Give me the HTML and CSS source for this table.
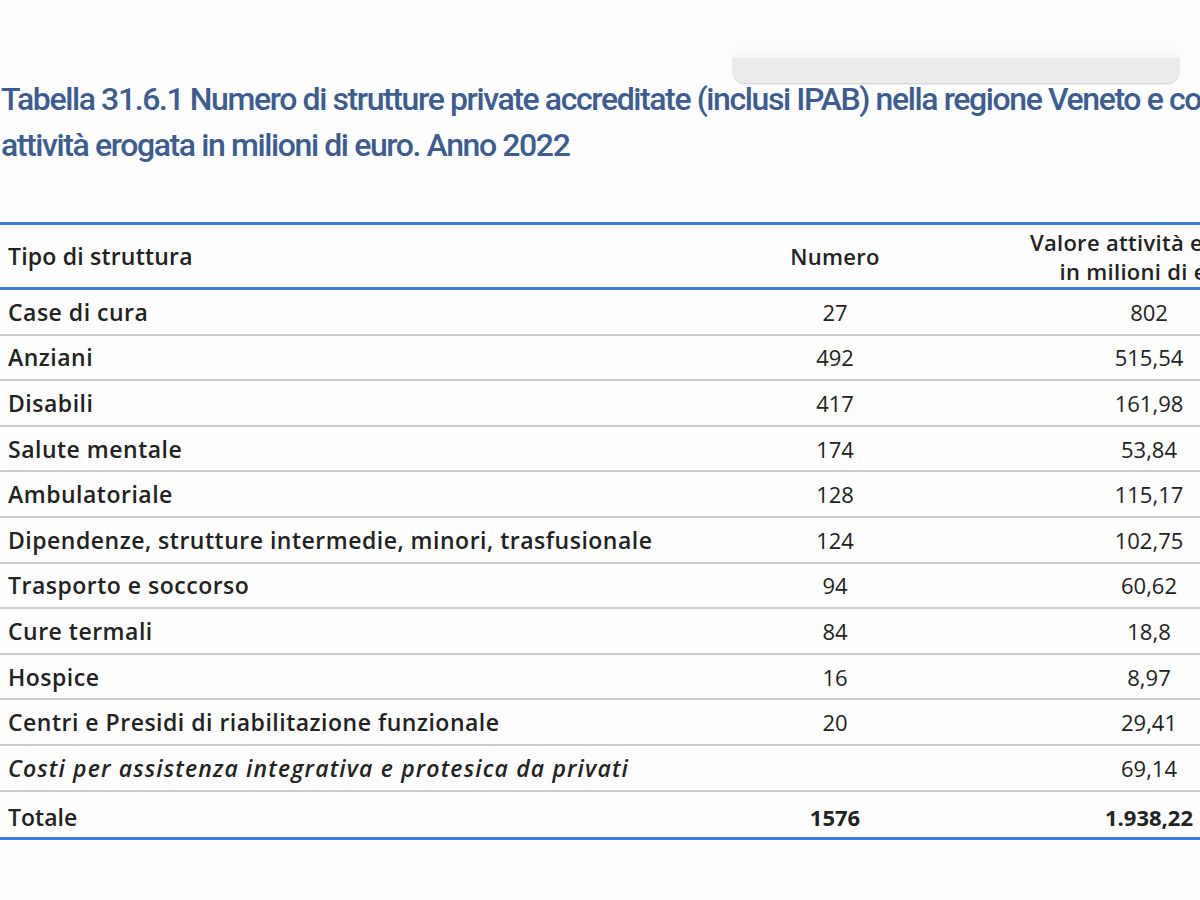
FILE: index.html
```html
<!DOCTYPE html>
<html lang="it">
<head>
<meta charset="utf-8">
<title>Tabella 31.6.1</title>
<link rel="stylesheet" href="styles.css">
</head>
<body>
<div class="page">
  <div class="popup"></div>
  <h1 class="title">Tabella 31.6.1 Numero di strutture private accreditate (inclusi IPAB) nella regione Veneto e con<br>attività erogata in milioni di euro. Anno 2022</h1>
  <table class="data">
    <thead>
      <tr>
        <th class="c-label">Tipo di struttura</th>
        <th class="c-num">Numero</th>
        <th class="c-val">Valore attività erogata<br>in milioni di euro</th>
      </tr>
    </thead>
    <tbody>
      <tr><td class="c-label">Case di cura</td><td class="c-num">27</td><td class="c-val">802</td></tr>
      <tr><td class="c-label">Anziani</td><td class="c-num">492</td><td class="c-val">515,54</td></tr>
      <tr><td class="c-label">Disabili</td><td class="c-num">417</td><td class="c-val">161,98</td></tr>
      <tr><td class="c-label">Salute mentale</td><td class="c-num">174</td><td class="c-val">53,84</td></tr>
      <tr><td class="c-label">Ambulatoriale</td><td class="c-num">128</td><td class="c-val">115,17</td></tr>
      <tr><td class="c-label">Dipendenze, strutture intermedie, minori, trasfusionale</td><td class="c-num">124</td><td class="c-val">102,75</td></tr>
      <tr><td class="c-label">Trasporto e soccorso</td><td class="c-num">94</td><td class="c-val">60,62</td></tr>
      <tr><td class="c-label">Cure termali</td><td class="c-num">84</td><td class="c-val">18,8</td></tr>
      <tr><td class="c-label">Hospice</td><td class="c-num">16</td><td class="c-val">8,97</td></tr>
      <tr><td class="c-label">Centri e Presidi di riabilitazione funzionale</td><td class="c-num">20</td><td class="c-val">29,41</td></tr>
      <tr><td class="c-label italic">Costi per assistenza integrativa e protesica da privati</td><td class="c-num"></td><td class="c-val">69,14</td></tr>
      <tr class="total"><td class="c-label">Totale</td><td class="c-num">1576</td><td class="c-val">1.938,22</td></tr>
    </tbody>
  </table>
</div>
</body>
</html>
```
FILE: styles.css
```css
html, body {
  margin: 0;
  padding: 0;
  background: #fdfdfd;
}
body {
  width: 1200px;
  height: 900px;
  overflow: hidden;
}
.page {
  position: relative;
  width: 1200px;
  height: 900px;
  overflow: hidden;
  padding-top: 76px;
  box-sizing: border-box;
}
.popup {
  position: absolute;
  left: 733px;
  top: 58px;
  width: 446px;
  height: 25px;
  background: #ebebeb;
  border-radius: 0 0 12px 12px;
  box-shadow: 0 1px 2px rgba(0,0,0,0.2), 0 -6px 14px rgba(0,0,0,0.04);
}
.title {
  margin: 0 0 54px 0;
  padding-left: 1px;
  font-family: Roboto, "Noto Sans", sans-serif;
  font-weight: 500;
  font-size: 32px;
  line-height: 46px;
  letter-spacing: -1.4px;
  color: #3e5d8e;
  white-space: nowrap;
}
.data {
  border-collapse: separate;
  border-spacing: 0;
  width: 1369px;
  table-layout: fixed;
  font-family: "Open Sans", "Noto Sans", sans-serif;
  font-size: 22px;
  color: #222;
}
.c-label { width: 735px; text-align: left; padding: 0 0 0 8px; }
.c-num { width: 200px; text-align: center; padding: 0; }
.c-val { width: 434px; text-align: center; padding: 0; }
.data th {
  font-weight: 600;
  height: 68px;
  box-sizing: border-box;
  border-top: 3px solid #3a7ed6;
  border-bottom: 3px solid #3a7ed6;
  line-height: 29px;
  vertical-align: middle;
}
.data th.c-label { font-size: 23px; letter-spacing: 0.2px; }
.data th.c-num { letter-spacing: 0.3px; }
.data th.c-val { padding: 2px 0 0 0; letter-spacing: 0.3px; }
.data td {
  height: 45.6px;
  box-sizing: border-box;
  border-bottom: 2px solid #cdcdcd;
  vertical-align: middle;
  line-height: 26px;
}
.data td.c-label {
  font-weight: 600;
  font-size: 23px;
  letter-spacing: 0.5px;
}
.data td.italic { font-style: italic; letter-spacing: 1.15px; }
.data td.c-val { padding-right: 6px; }
.data tr.total td {
  border-bottom: 3px solid #3a7ed6;
  height: 48px;
  padding-top: 6px;
}
.data tr.total td.c-label { letter-spacing: 0; }
.data tr.total td.c-num, .data tr.total td.c-val { font-weight: 700; }
```
